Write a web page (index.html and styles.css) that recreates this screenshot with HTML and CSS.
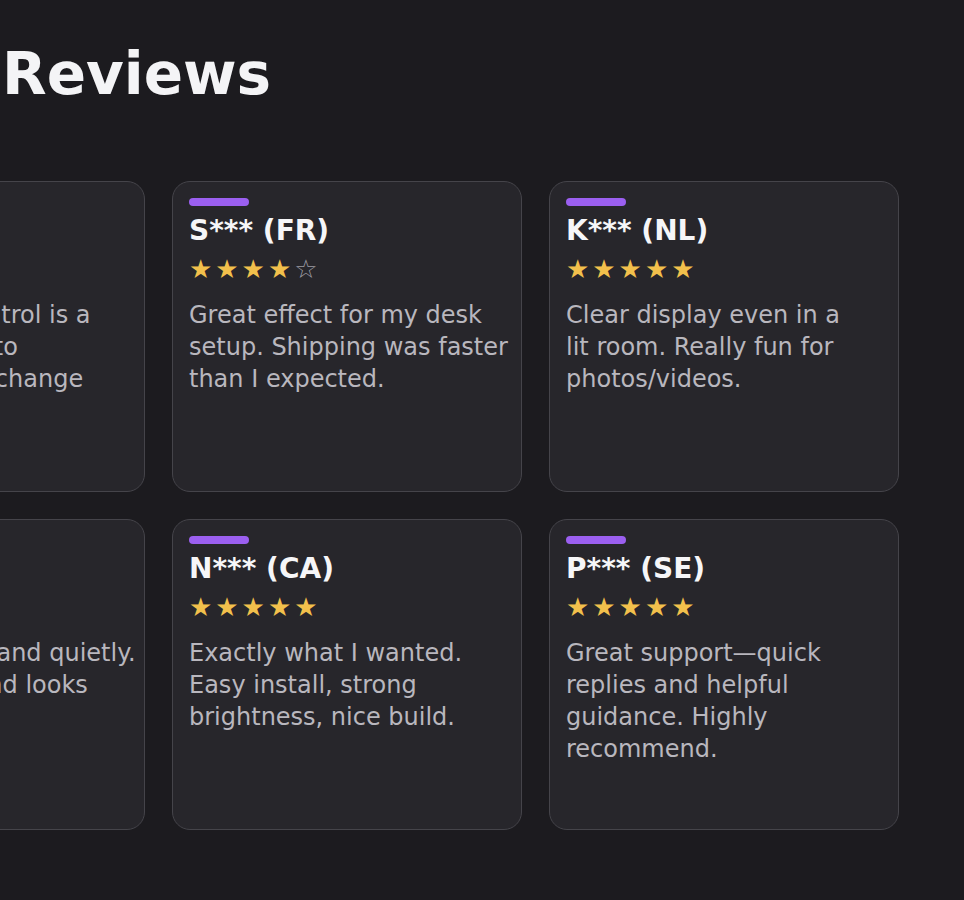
FILE: index.html
```html
<!DOCTYPE html>
<html lang="en">
<head>
<meta charset="utf-8">
<title>Reviews</title>
<link rel="stylesheet" href="styles.css">
</head>
<body>
<main class="page">
  <h1 class="title">Reviews</h1>
  <div class="grid-wrap">
    <div class="grid">
      <article class="card">
        <span class="accent"></span>
        <h2 class="name">M*** (DE)</h2>
        <div class="stars">★★★★★</div>
        <p class="text">The remote control is a real plus, easy to customize and change colors.</p>
      </article>
      <article class="card">
        <span class="accent"></span>
        <h2 class="name">S*** (FR)</h2>
        <div class="stars">★★★★<span class="empty">☆</span></div>
        <p class="text">Great effect for my desk setup. Shipping was faster than I expected.</p>
      </article>
      <article class="card">
        <span class="accent"></span>
        <h2 class="name">K*** (NL)</h2>
        <div class="stars">★★★★★</div>
        <p class="text">Clear display even in a lit&nbsp;room. Really fun for photos/videos.</p>
      </article>
      <article class="card">
        <span class="accent"></span>
        <h2 class="name">L*** (US)</h2>
        <div class="stars">★★★★★</div>
        <p class="text">Works reliably, and quietly. Sturdy build, and looks great too.</p>
      </article>
      <article class="card">
        <span class="accent"></span>
        <h2 class="name">N*** (CA)</h2>
        <div class="stars">★★★★★</div>
        <p class="text">Exactly what I wanted. Easy install, strong brightness, nice build.</p>
      </article>
      <article class="card">
        <span class="accent"></span>
        <h2 class="name">P*** (SE)</h2>
        <div class="stars">★★★★★</div>
        <p class="text">Great support—quick replies and helpful guidance. Highly recommend.</p>
      </article>
    </div>
  </div>
</main>
</body>
</html>
```
FILE: styles.css
```css
html, body {
  margin: 0;
  padding: 0;
  background: #1c1b1f;
  overflow: hidden;
}

body {
  font-family: "DejaVu Sans", "Noto Sans", sans-serif;
  color: #f2f2f4;
}

.page {
  padding: 39px 0 0 0;
}

.title {
  margin: 0 0 72px 0;
  padding-left: 2px;
  font-size: 58px;
  line-height: 70px;
  font-weight: 700;
  color: #f4f4f6;
}

.grid-wrap {
  margin-left: -205px;
}

.grid {
  display: grid;
  grid-template-columns: repeat(3, 350px);
  grid-auto-rows: 311px;
  gap: 27px;
}

.card {
  box-sizing: border-box;
  display: flex;
  flex-direction: column;
  align-items: flex-start;
  padding: 16px 8px 16px 16px;
  background: #27262b;
  border: 1px solid #45444a;
  border-radius: 18px;
}

.accent {
  display: block;
  width: 60px;
  height: 8px;
  border-radius: 4px;
  background: #9b5ff0;
}

.name {
  margin: 8px 0 0 0;
  font-size: 28px;
  line-height: 34px;
  font-weight: 700;
  color: #f6f6f8;
}

.stars {
  margin-top: 6px;
  font-size: 26px;
  line-height: 30px;
  letter-spacing: 3px;
  color: #f2c04c;
}

.empty {
  color: #9c9ba2;
}

.text {
  margin: 15px 0 0 0;
  font-size: 24px;
  line-height: 32px;
  color: #b9b7be;
}
```
